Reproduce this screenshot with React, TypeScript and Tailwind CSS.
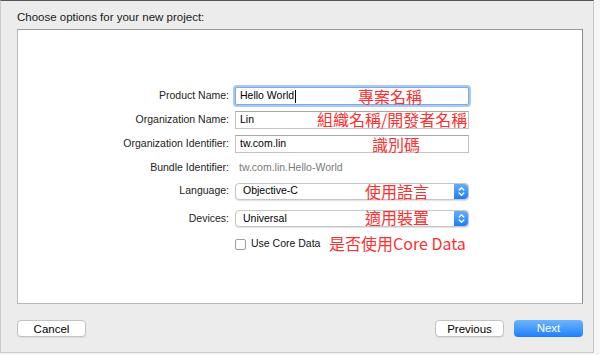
const ui = "font-['Helvetica_Neue','Liberation_Sans',Arial,sans-serif]"
const cjk = "font-['Noto_Sans_CJK_TC','Noto_Sans',sans-serif]"

function Note({ text, left, top = 0 }: { text: string; left: number; top?: number }) {
  return (
    <span
      className={`${cjk} absolute whitespace-nowrap text-[16px] leading-none text-[#ff2f2f]`}
      style={{ left, top: `calc(50% + ${top}px)`, transform: "translateY(-50%)" }}
    >
      {text}
    </span>
  )
}

function Stepper() {
  return (
    <div className="flex h-full w-[14px] items-center justify-center rounded-r-[4px] bg-gradient-to-b from-[#63aefc] to-[#1a7df8]">
      <svg width="7" height="11" viewBox="0 0 7 11" fill="none" stroke="white" strokeWidth="1.3" strokeLinecap="round" strokeLinejoin="round">
        <path d="M1.2 4 L3.5 1.7 L5.8 4" />
        <path d="M1.2 7 L3.5 9.3 L5.8 7" />
      </svg>
    </div>
  )
}

function Row({ h, label, children }: { h: number; label: string; children: React.ReactNode }) {
  return (
    <div className="flex items-center" style={{ height: h }}>
      <div className="w-[211px] text-right text-[10.5px] text-[#222]">{label}</div>
      <div className="relative ml-[6px] flex h-full w-[234px] items-center">{children}</div>
    </div>
  )
}

const field = "flex h-[18px] w-full items-center border border-[#c4c4c4] border-t-[#a8a8a8] bg-white pl-[4px] text-[10.5px] text-black"
const popup = "flex h-[17px] w-full items-center justify-between rounded-[4px] border border-[#c6c6c6] bg-white text-[10.5px] text-black shadow-[0_1px_1px_rgba(0,0,0,0.12)]"
const plainBtn = "h-[17px] w-[69px] rounded-[4px] border border-[#c3c3c3] bg-white text-black shadow-[0_1px_1px_rgba(0,0,0,0.08)]"

export default function App() {
  return (
    <div className={`${ui} h-[355px] w-[600px] bg-[#f5f5f5]`}>
      <div className="flex h-[353px] w-[594px] flex-col border border-[#cacaca] border-t-[#555] bg-[#ececec]">
        <div className="h-[28px] px-[16px] pt-[9px] text-[11.5px] leading-[14px] text-[#1a1a1a]">
          Choose options for your new project:
        </div>

        <div className="ml-[16px] h-[275px] w-[566px] border border-[#b9b9b9] border-t-[#9a9a9a] border-r-[#8a8a8a] bg-white pt-[55px]">
          <Row h={22} label="Product Name:">
            <div className="flex h-[18px] w-full items-center rounded-[2px] border border-[#7fa9e6] bg-white pl-[4px] text-[10.5px] text-black shadow-[0_0_0_2px_#a9c8f3]">
              Hello World<span className="ml-[1px] inline-block h-[13px] w-[1px] bg-black" />
            </div>
            <Note text="專案名稱" left={123} />
          </Row>
          <Row h={25} label="Organization Name:">
            <div className={field}>Lin</div>
            <Note text="組織名稱/開發者名稱" left={82} top={-1} />
          </Row>
          <Row h={24} label="Organization Identifier:">
            <div className={field}>tw.com.lin</div>
            <Note text="識別碼" left={137} />
          </Row>
          <Row h={24} label="Bundle Identifier:">
            <div className="pl-[4px] text-[10.5px] text-[#7a7a7a]">tw.com.lin.Hello-World</div>
          </Row>
          <Row h={22} label="Language:">
            <div className={popup}>
              <span className="pl-[7px]">Objective-C</span>
              <Stepper />
            </div>
            <Note text="使用語言" left={130} />
          </Row>
          <Row h={33} label="Devices:">
            <div className={popup}>
              <span className="pl-[7px]">Universal</span>
              <Stepper />
            </div>
            <Note text="適用裝置" left={130} top={-2} />
          </Row>
          <Row h={18} label="">
            <div className="flex items-center text-[10.5px] text-[#111]">
              <span className="h-[11px] w-[11px] rounded-[2px] border border-[#9e9e9e] bg-white" />
              <span className="ml-[5px]">Use Core Data</span>
            </div>
            <Note text="是否使用Core Data" left={94} top={-1} />
          </Row>
        </div>

        <div className="mt-[16px] flex h-[17px] items-center pl-[16px] pr-[10px] text-[11.5px]">
          <button className={plainBtn}>Cancel</button>
          <div className="flex-1" />
          <button className={plainBtn}>Previous</button>
          <button className="ml-[10px] h-[17px] w-[69px] rounded-[4px] bg-gradient-to-b from-[#6cb4fc] to-[#1a7ffa] font-medium text-white">
            Next
          </button>
        </div>
      </div>
    </div>
  )
}
